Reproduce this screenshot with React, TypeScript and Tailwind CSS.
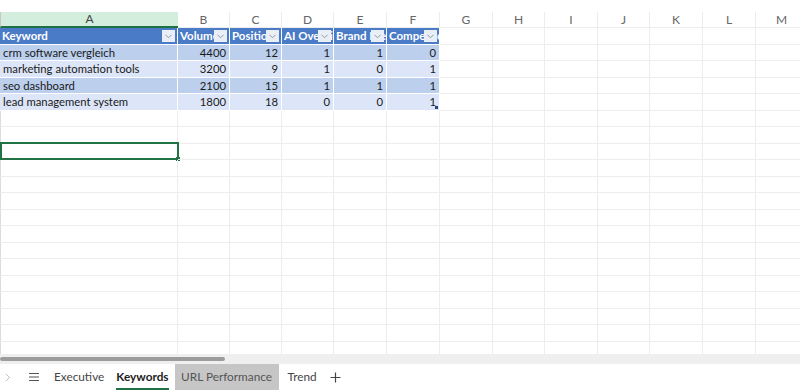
import React from "react";

const widths = [178, 52, 52, 52, 53, 53, 53, 52, 53, 52, 53, 53, 52];
const letters = ["A", "B", "C", "D", "E", "F", "G", "H", "I", "J", "K", "L", "M"];
const headers = ["Keyword", "Volume", "Position", "AI Overview", "Brand Mention", "Competitor"];
const data: (string | number)[][] = [
  ["crm software vergleich", 4400, 12, 1, 1, 0],
  ["marketing automation tools", 3200, 9, 1, 0, 1],
  ["seo dashboard", 2100, 15, 1, 1, 1],
  ["lead management system", 1800, 18, 0, 0, 1],
];

const font = { fontFamily: 'Lato, "Noto Sans", sans-serif' };

function FilterBtn() {
  return (
    <div className="absolute right-[2px] top-[2px] flex h-[12px] w-[13px] items-center justify-center bg-[#e9eef7]">
      <svg width="7" height="5" viewBox="0 0 7 5">
        <path d="M0.5 0.8 L3.5 3.8 L6.5 0.8" stroke="#8a8f99" strokeWidth="0.9" fill="none" />
      </svg>
    </div>
  );
}

export default function App() {
  const emptyRows = Array.from({ length: 16 });
  return (
    <div className="flex h-[390px] w-[800px] flex-col overflow-hidden bg-white text-[11.3px]" style={font}>
      <div className="h-[12px] shrink-0 bg-white" />
      <div className="flex h-[16px] shrink-0">
        {letters.map((l, i) => (
          <div
            key={l}
            className={
              i === 0
                ? "flex shrink-0 items-center justify-center border-b-2 border-l border-b-[#1e7145] border-l-[#c8c8c8] bg-[#d3eedd] text-[12px] text-[#444]"
                : "flex shrink-0 items-center justify-center border-b border-r border-[#ececec] text-[12px] text-[#666]"
            }
            style={{ width: widths[i] }}
          >
            {l}
          </div>
        ))}
      </div>
      <div className="relative flex-1 overflow-hidden">
        {/* header row */}
        <div className="flex h-[16.5px]">
          {widths.map((w, i) => (
            <div
              key={i}
              className={
                i < 6
                  ? "relative shrink-0 overflow-hidden whitespace-nowrap border-r border-b border-white bg-[#4a7bc6] pl-[2px] text-[11.5px] font-bold leading-[15.5px] text-white"
                  : "shrink-0 border-r border-b border-[#ededed]"
              }
              style={{ width: w }}
            >
              {i < 6 ? (
                <>
                  {headers[i]}
                  <FilterBtn />
                </>
              ) : null}
            </div>
          ))}
        </div>
        {data.map((row, r) => (
          <div key={r} className="flex h-[16.5px]">
            {widths.map((w, i) => (
              <div
                key={i}
                className={
                  i < 6
                    ? `relative shrink-0 overflow-hidden whitespace-nowrap border-r border-b border-white leading-[15.5px] text-[#1a1a1a] ${
                        r % 2 === 0 ? "bg-[#bcd0ee]" : "bg-[#dde6f8]"
                      } ${i === 0 ? "pl-[3px]" : "pr-[3px] text-right"}`
                    : "shrink-0 border-r border-b border-[#ededed]"
                }
                style={{ width: w }}
              >
                {i < 6 ? row[i] : null}
                {r === 3 && i === 5 ? (
                  <div className="absolute bottom-[1px] right-[1px] h-[3px] w-[3px] bg-[#26457a]" />
                ) : null}
              </div>
            ))}
          </div>
        ))}
        {emptyRows.map((_, r) => (
          <div key={r} className="flex h-[16.5px]">
            {widths.map((w, i) => (
              <div
                key={i}
                className={`relative shrink-0 border-b border-r border-[#ededed] ${i === 0 ? "border-l border-l-[#dcdcdc]" : ""}`}
                style={{ width: w }}
              >
                {r === 2 && i === 0 ? (
                  <div className="absolute -left-[1px] -top-[2px] h-[18px] w-[179px] border-2 border-[#217346]">
                    <div className="absolute -bottom-[3px] -right-[3px] h-[4px] w-[4px] bg-[#217346]" />
                  </div>
                ) : null}
              </div>
            ))}
          </div>
        ))}
      </div>
      {/* scrollbar */}
      <div className="flex h-[10px] shrink-0 items-center bg-[#efefef]">
        <div className="h-[4px] w-[225px] rounded-full bg-[#9c9c9c]" />
      </div>
      {/* tabs */}
      <div className="flex h-[26px] shrink-0 items-stretch bg-white text-[11.8px] text-[#444]">
        <div className="flex w-[16px] items-center justify-center">
          <svg width="6" height="9" viewBox="0 0 6 9">
            <path d="M1 1 L4.5 4.5 L1 8" stroke="#bdbdbd" strokeWidth="1" fill="none" />
          </svg>
        </div>
        <div className="ml-[10px] flex w-[16px] items-center justify-center">
          <svg width="12" height="10" viewBox="0 0 12 10">
            <path d="M1 1.5 H11 M1 5 H11 M1 8.5 H11" stroke="#555" strokeWidth="1.1" />
          </svg>
        </div>
        <div className="ml-[12px] flex items-center">Executive</div>
        <div className="relative ml-[12px] flex items-center font-bold text-[#222]">
          Keywords
          <div className="absolute bottom-0 left-0 right-0 h-[2px] bg-[#1e7145]" />
        </div>
        <div className="ml-[6px] flex w-[104px] items-center justify-center bg-[#c6c6c6] text-[#555]">
          URL Performance
        </div>
        <div className="ml-[9px] flex items-center">Trend</div>
        <div className="ml-[13px] flex items-center">
          <svg width="11" height="11" viewBox="0 0 11 11">
            <path d="M5.5 0.5 V10.5 M0.5 5.5 H10.5" stroke="#444" strokeWidth="1.2" />
          </svg>
        </div>
      </div>
    </div>
  );
}
